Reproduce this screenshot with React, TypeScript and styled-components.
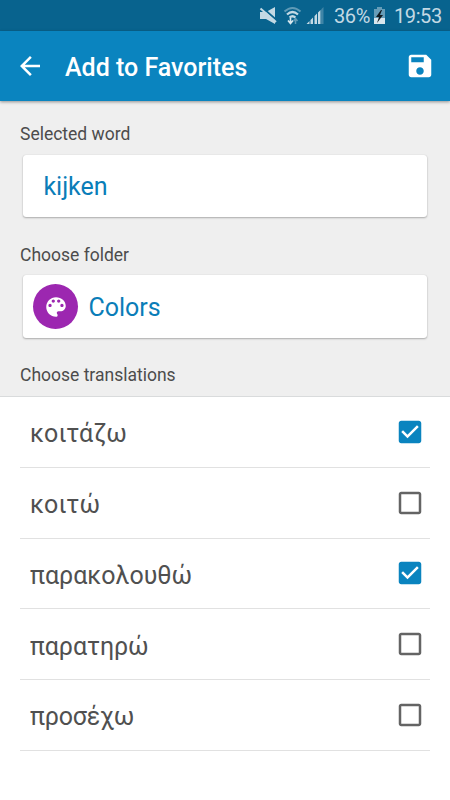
import React from "react";
import styled, { createGlobalStyle } from "styled-components";

const GlobalStyle = createGlobalStyle`
  * { box-sizing: border-box; }
  body { margin: 0; background: #fff; font-family: Roboto, "Noto Sans", sans-serif; }
`;

const Screen = styled.main`
  width: 450px;
  height: 800px;
  display: flex;
  flex-direction: column;
  overflow: hidden;
  background: #fff;
`;

const StatusBar = styled.div`
  height: 31px;
  flex: none;
  display: flex;
  align-items: center;
  padding: 1px 8px 0 259px;
  background: #08638e;
  color: #c3d9e4;
  font-size: 20px;
  line-height: 30px;
`;

const StatusIcons = styled.svg`
  width: 71px;
  height: 30px;
  flex: none;
`;

const StatusText = styled.span<{ $width: number; $gap: number; $spacing: number }>`
  width: ${(p) => p.$width}px;
  margin-left: ${(p) => p.$gap}px;
  letter-spacing: ${(p) => p.$spacing}px;
  white-space: nowrap;
`;

const Battery = styled.svg`
  width: 14px;
  height: 30px;
  margin-left: 2px;
  flex: none;
`;

const AppBar = styled.header`
  height: 70px;
  flex: none;
  display: flex;
  align-items: center;
  padding: 0 15px;
  background: #0a84bf;
  box-shadow: 0 1px 3px rgba(0, 0, 0, 0.4);
  z-index: 1;
`;

const Title = styled.h1`
  flex: 1;
  margin: 0 0 0 20px;
  padding-top: 3px;
  color: #fff;
  font-size: 25px;
  font-weight: 500;
  line-height: 30px;
`;

const IconButton = styled.button`
  width: 30px;
  height: 30px;
  padding: 0;
  border: 0;
  background: none;
  color: #fff;
`;

const Glyph = styled.svg<{ $size: number }>`
  display: block;
  width: ${(p) => p.$size}px;
  height: ${(p) => p.$size}px;
  fill: currentColor;
`;

const Form = styled.section`
  height: 296px;
  flex: none;
  padding: 23.4px 23.4px 0;
  background: #efefef;
  border-bottom: 1px solid #d9dbdc;
`;

const Label = styled.div`
  height: 20px;
  margin-left: -3.4px;
  color: #4c4c4c;
  font-size: 17.5px;
  line-height: 20px;
`;

const Card = styled.div<{ $inset: number }>`
  height: 62.5px;
  margin: 10.5px 0 27.5px;
  padding-left: ${(p) => p.$inset}px;
  display: flex;
  align-items: center;
  border-radius: 3px;
  background: #fff;
  box-shadow: 0 1px 2px rgba(0, 0, 0, 0.28), 0 0 1px rgba(0, 0, 0, 0.16);
  color: #0a7db8;
  font-size: 25px;
  line-height: 30px;
`;

const CardText = styled.span`
  padding-top: 2.5px;
`;

const FolderBadge = styled.span`
  width: 45px;
  height: 45px;
  margin-right: 10px;
  display: grid;
  place-items: center;
  border-radius: 50%;
  background: #9c27b0;
  color: #fff;
`;

const List = styled.ul`
  margin: 0;
  padding: 0 20px;
  list-style: none;
`;

const Row = styled.li`
  height: 70.75px;
  display: flex;
  align-items: center;
  justify-content: space-between;
  padding: 0 5px 0 10px;
  border-bottom: 1px solid #e1e1e1;
`;

const Word = styled.span<{ $spacing: number }>`
  padding-top: 5px;
  color: #505050;
  font-size: 25px;
  line-height: 30px;
  letter-spacing: ${(p) => p.$spacing}px;
`;

const Check = styled.button<{ $checked: boolean }>`
  width: 30px;
  height: 30px;
  padding: 0;
  border: 0;
  background: none;
  color: ${(p) => (p.$checked ? "#0a84bf" : "#646464")};
`;

const paths = {
  back: "M20 11H7.83l5.59-5.59L12 4l-8 8 8 8 1.41-1.41L7.83 13H20v-2z",
  save: "M17 3H5c-1.11 0-2 .9-2 2v14c0 1.1.89 2 2 2h14c1.1 0 2-.9 2-2V7l-4-4zm-5 16c-1.66 0-3-1.34-3-3s1.34-3 3-3 3 1.34 3 3-1.34 3-3 3zm3-10H5V5h10v4z",
  palette:
    "M12 3c-4.97 0-9 4.03-9 9s4.03 9 9 9c.83 0 1.5-.67 1.5-1.5 0-.39-.15-.74-.39-1.01-.23-.26-.38-.61-.38-.99 0-.83.67-1.5 1.5-1.5H16c2.76 0 5-2.24 5-5 0-4.42-4.03-8-9-8zm-5.5 9c-.83 0-1.5-.67-1.5-1.5S5.67 9 6.5 9 8 9.67 8 10.5 7.33 12 6.5 12zm3-4C8.67 8 8 7.33 8 6.5S8.67 5 9.5 5s1.5.67 1.5 1.5S10.33 8 9.5 8zm5 0c-.83 0-1.5-.67-1.5-1.5S13.67 5 14.5 5s1.5.67 1.5 1.5S15.33 8 14.5 8zm3 4c-.83 0-1.5-.67-1.5-1.5S16.67 9 17.5 9s1.5.67 1.5 1.5-.67 1.5-1.5 1.5z",
  checked:
    "M19 3H5c-1.11 0-2 .9-2 2v14c0 1.1.89 2 2 2h14c1.11 0 2-.9 2-2V5c0-1.1-.89-2-2-2zm-9 14l-5-5 1.41-1.41L10 14.17l7.59-7.59L19 8l-9 9z",
  unchecked:
    "M19 5v14H5V5h14m0-2H5c-1.1 0-2 .9-2 2v14c0 1.1.9 2 2 2h14c1.1 0 2-.9 2-2V5c0-1.1-.9-2-2-2z",
};

function Icon({ name, size = 30 }: { name: keyof typeof paths; size?: number }) {
  return (
    <Glyph $size={size} viewBox="0 0 24 24" aria-hidden="true">
      <path d={paths[name]} />
    </Glyph>
  );
}

const words = [
  { text: "κοιτάζω", checked: true, spacing: 0.2 },
  { text: "κοιτώ", checked: false, spacing: 0.2 },
  { text: "παρακολουθώ", checked: true, spacing: 0 },
  { text: "παρατηρώ", checked: false, spacing: -0.1 },
  { text: "προσέχω", checked: false, spacing: -0.2 },
];

export default function App() {
  return (
    <>
      <GlobalStyle />
      <Screen>
        <StatusBar>
          <StatusIcons viewBox="0 0 71 30" fill="none">
            <path d="M1 11h6l9-5v17l-9-5H1z" fill="#c3d9e4" />
            <path d="M2 5.500l16 14" stroke="#08638e" strokeWidth="2" />
            <path d="M1.500 7.500l15.500 13.500" stroke="#c3d9e4" strokeWidth="2" />
            <path d="M25.500 10.500Q33.500 3.500 41.500 10.500" stroke="#5f9ab6" strokeWidth="2" />
            <path d="M28 13.500q5.500-5 11 0M30.500 16.500q3-2.500 6 0" stroke="#c3d9e4" strokeWidth="2.200" />
            <path d="M31.500 17v5m-2.500-2.500l2.500 3 2.500-3" stroke="#d8e8ef" strokeWidth="1.600" />
            <path d="M36.500 23v-5m-2 2l2-2.500 2 2.500" stroke="#5f9ab6" strokeWidth="1.500" />
            <path d="M47.500 23l3-3v3zM51.500 19l2.500-2.500V23h-2.500zM55.500 15l2.500-2.500V23h-2.500zM59 11.500l2.500-2.500v14H59z" fill="#c3d9e4" />
            <path d="M62 8.500L64.500 6v17H62z" fill="#3f85a7" />
          </StatusIcons>
          <StatusText $width={37} $gap={4} $spacing={-0.4}>36%</StatusText>
          <Battery viewBox="0 0 14 30">
            <path d="M4 6h5v2h3v15H1V8h3z" fill="#669db8" />
            <path d="M1 17h11v6H1z" fill="#d8e6ed" />
            <path d="M8 9l-5 7h3l-2 6 6-8H7l2-5z" fill="#101a20" />
          </Battery>
          <StatusText $width={48} $gap={7} $spacing={-0.4}>19:53</StatusText>
        </StatusBar>
        <AppBar>
          <IconButton aria-label="Back"><Icon name="back" /></IconButton>
          <Title>Add to Favorites</Title>
          <IconButton aria-label="Save"><Icon name="save" /></IconButton>
        </AppBar>
        <Form>
          <Label>Selected word</Label>
          <Card $inset={20}><CardText>kijken</CardText></Card>
          <Label>Choose folder</Label>
          <Card $inset={10}>
            <FolderBadge><Icon name="palette" size={26} /></FolderBadge>
            <CardText>Colors</CardText>
          </Card>
          <Label>Choose translations</Label>
        </Form>
        <List>
          {words.map((w) => (
            <Row key={w.text}>
              <Word $spacing={w.spacing}>{w.text}</Word>
              <Check $checked={w.checked} role="checkbox" aria-checked={w.checked} aria-label={w.text}>
                <Icon name={w.checked ? "checked" : "unchecked"} />
              </Check>
            </Row>
          ))}
        </List>
      </Screen>
    </>
  );
}
